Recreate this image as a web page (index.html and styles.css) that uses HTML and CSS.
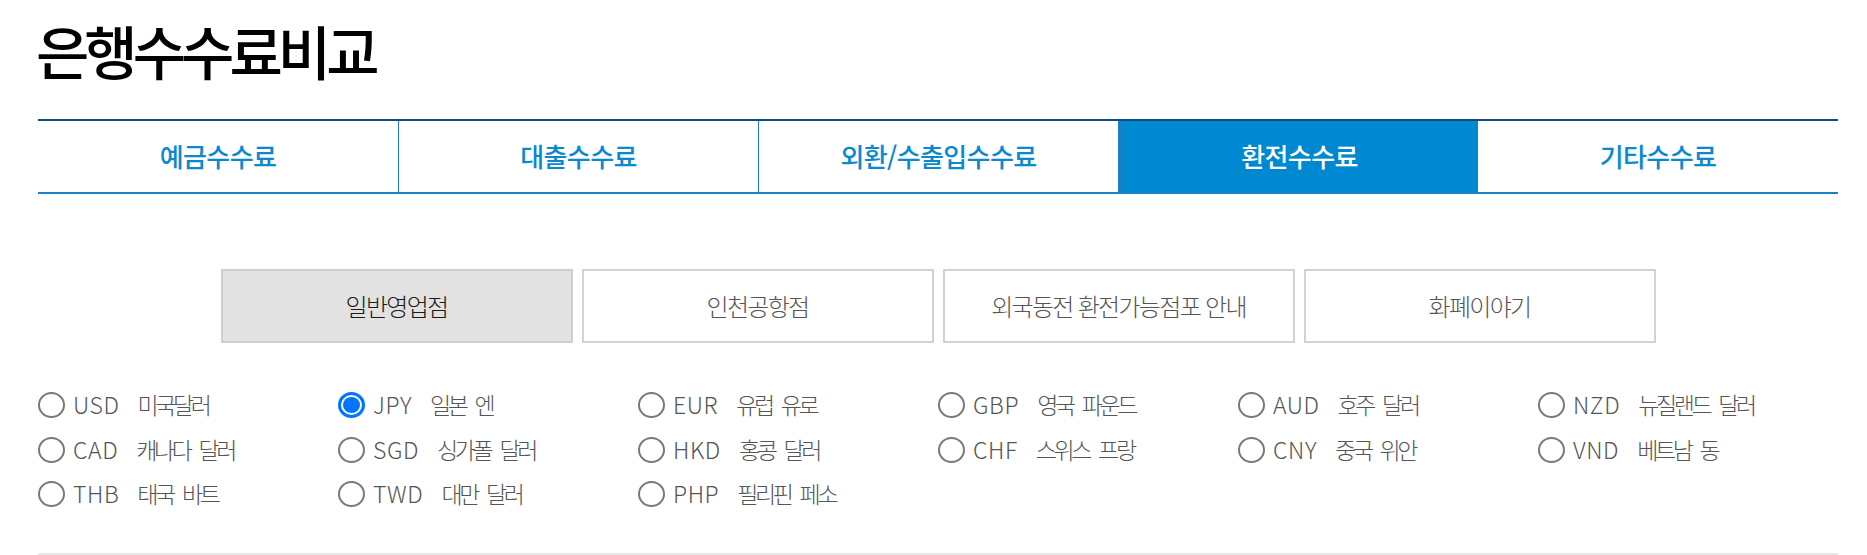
FILE: index.html
```html
<!DOCTYPE html>
<html lang="ko">
<head>
<meta charset="utf-8">
<title>은행수수료비교</title>
<link rel="stylesheet" href="styles.css">
</head>
<body>
<div class="page">
  <h1 class="title">은행수수료비교</h1>

  <nav class="tabs">
    <a class="tab">예금수수료</a>
    <a class="tab">대출수수료</a>
    <a class="tab">외환/수출입수수료</a>
    <a class="tab is-active">환전수수료</a>
    <a class="tab">기타수수료</a>
  </nav>

  <div class="subtabs">
    <a class="subtab is-active">일반영업점</a>
    <a class="subtab">인천공항점</a>
    <a class="subtab">외국동전 환전가능점포 안내</a>
    <a class="subtab">화폐이야기</a>
  </div>

  <div class="currencies">
    <label class="cur"><input type="radio" name="cur"><span class="code">USD</span><span class="name">미국달러</span></label>
    <label class="cur"><input type="radio" name="cur" checked><span class="code">JPY</span><span class="name">일본 엔</span></label>
    <label class="cur"><input type="radio" name="cur"><span class="code">EUR</span><span class="name">유럽 유로</span></label>
    <label class="cur"><input type="radio" name="cur"><span class="code">GBP</span><span class="name">영국 파운드</span></label>
    <label class="cur"><input type="radio" name="cur"><span class="code">AUD</span><span class="name">호주 달러</span></label>
    <label class="cur"><input type="radio" name="cur"><span class="code">NZD</span><span class="name">뉴질랜드 달러</span></label>
    <label class="cur"><input type="radio" name="cur"><span class="code">CAD</span><span class="name">캐나다 달러</span></label>
    <label class="cur"><input type="radio" name="cur"><span class="code">SGD</span><span class="name">싱가폴 달러</span></label>
    <label class="cur"><input type="radio" name="cur"><span class="code">HKD</span><span class="name">홍콩 달러</span></label>
    <label class="cur"><input type="radio" name="cur"><span class="code">CHF</span><span class="name">스위스 프랑</span></label>
    <label class="cur"><input type="radio" name="cur"><span class="code">CNY</span><span class="name">중국 위안</span></label>
    <label class="cur"><input type="radio" name="cur"><span class="code">VND</span><span class="name">베트남 동</span></label>
    <label class="cur"><input type="radio" name="cur"><span class="code">THB</span><span class="name">태국 바트</span></label>
    <label class="cur"><input type="radio" name="cur"><span class="code">TWD</span><span class="name">대만 달러</span></label>
    <label class="cur"><input type="radio" name="cur"><span class="code">PHP</span><span class="name">필리핀 페소</span></label>
  </div>

  <div class="rule"></div>
</div>
</body>
</html>
```

FILE: styles.css
```css
html, body {
  margin: 0;
  padding: 0;
  background: #fff;
}

body {
  font-family: "Noto Sans CJK KR", "Noto Sans", sans-serif;
  color: #222;
}

.page {
  width: 1800px;
  margin-left: 38px;
}

.title {
  margin: 0 0 0 -2px;
  padding-top: 15px;
  height: 119px;
  box-sizing: border-box;
  font-size: 58px;
  line-height: 70px;
  font-weight: 500;
  letter-spacing: -5px;
  color: #000;
}

.tabs {
  display: grid;
  grid-template-columns: repeat(5, 1fr);
  border-top: 2px solid #0c4d86;
  border-bottom: 2px solid #1b80c5;
  height: 75px;
  box-sizing: border-box;
}

.tab {
  display: flex;
  align-items: center;
  justify-content: center;
  font-size: 26px;
  font-weight: 500;
  letter-spacing: -0.6px;
  color: #0a88d0;
  border-left: 1px solid #1b80c5;
  padding-bottom: 2px;
}

.tab:first-child {
  border-left: none;
}

.tab.is-active {
  background: #0088d1;
  color: #fff;
  border-left: 3px double #1b80c5;
}

.tab.is-active + .tab {
  border-left: none;
}

.subtabs {
  display: flex;
  justify-content: center;
  gap: 9px;
  margin-top: 75px;
}

.subtab {
  width: 352px;
  height: 74px;
  box-sizing: border-box;
  border: 2px solid #d2d2d2;
  display: flex;
  align-items: center;
  justify-content: center;
  font-size: 24px;
  font-weight: 300;
  letter-spacing: -1.7px;
  color: #555;
  background: #fff;
  padding-bottom: 2px;
}

.subtab.is-active {
  background: #e2e2e2;
  color: #1a1a1a;
  border-color: #cfcfcf;
}

.currencies {
  display: grid;
  grid-template-columns: repeat(6, 300px);
  grid-auto-rows: 44.5px;
  margin-top: 40px;
}

.cur {
  display: flex;
  align-items: center;
  font-size: 23px;
  font-weight: 300;
  color: #555;
  white-space: nowrap;
}

.cur input {
  appearance: none;
  -webkit-appearance: none;
  margin: 0 8px 0 0;
  width: 27px;
  height: 26px;
  border: 2px solid #7a7a7a;
  border-radius: 50%;
  box-sizing: border-box;
  flex: none;
  position: relative;
  background: #fff;
}

.cur input:checked {
  border: 3px solid #0075ff;
}

.cur input:checked::after {
  content: "";
  position: absolute;
  left: 2px;
  top: 2px;
  right: 2px;
  bottom: 2px;
  border-radius: 50%;
  background: #0075ff;
}

.cur .code {
  margin-right: 18px;
  padding-bottom: 2px;
  letter-spacing: 0.6px;
}

.cur .name {
  padding-bottom: 2px;
  letter-spacing: -3.4px;
  word-spacing: 6px;
}

.rule {
  margin-top: 36px;
  border-top: 2px solid #e6e6e6;
}
```
